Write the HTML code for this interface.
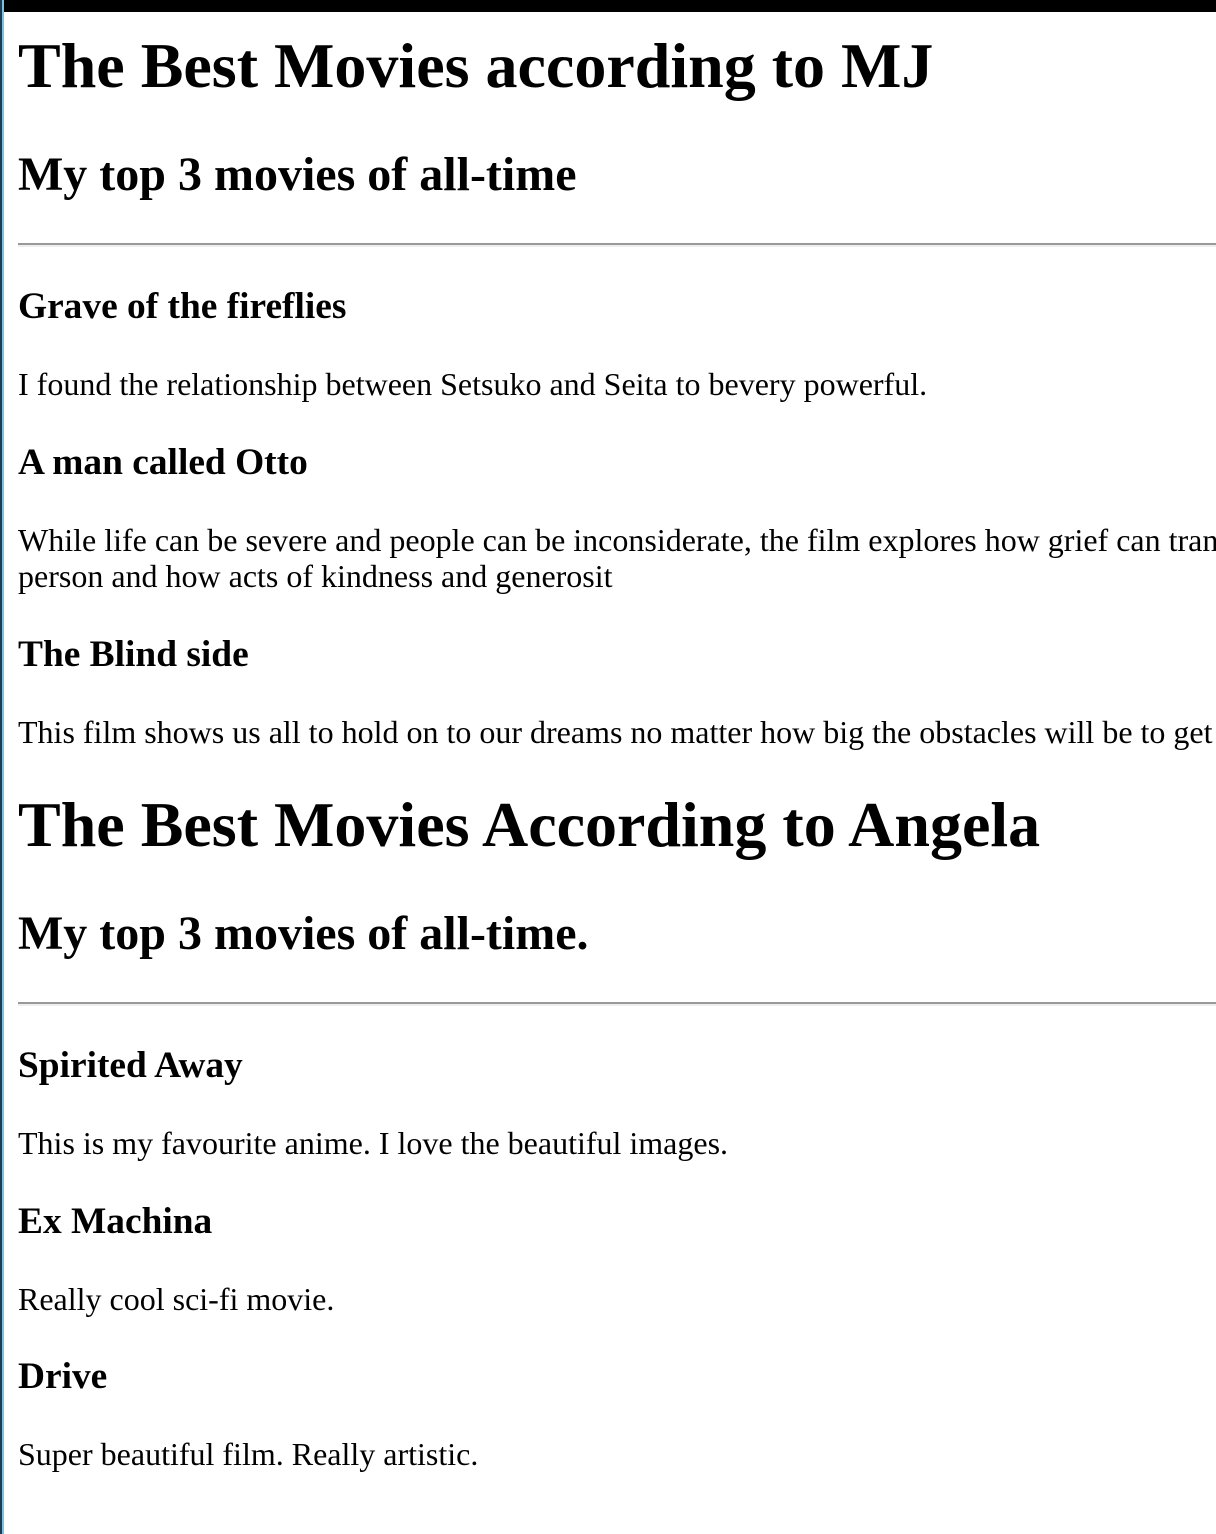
<!DOCTYPE html>
<html><head><meta charset="utf-8"><style>
html,body{margin:0;padding:0;background:#fff;overflow:hidden;}
html{width:1216px;height:1534px;}
#bar{position:absolute;left:0;top:0;width:1216px;height:12px;background:#000;}
#l1{position:absolute;left:0;top:0;width:2px;height:1534px;background:#1d3d55;}
#l2{position:absolute;left:2px;top:0;width:2px;height:1534px;background:#7fc0e0;}
#w{position:absolute;left:18px;top:12px;width:1198px;height:1522px;overflow:hidden;}
#c{width:1330px;font-family:"Liberation Serif",serif;color:#000;padding-top:1px;}
h1{font-size:64px;margin:44px 0;line-height:1.15;}
h1.first{margin-top:16px;}
h1.second{margin-top:37px;}
h2{font-size:48px;margin:41px 0;line-height:1.15;}
hr{border:0;border-top:2px solid #999;border-bottom:2px solid #eee;margin:15px 0 14px;height:0;}
h3{font-size:37.4px;margin:38px 0;line-height:1.15;}
p{font-size:32px;margin:33px 0;line-height:1.15;}
.nw{white-space:nowrap;}
</style></head><body>
<div id="bar"></div><div id="l1"></div><div id="l2"></div>
<div id="w"><div id="c">
<h1 class="first">The Best Movies according to MJ</h1>
<h2>My top 3 movies of all-time</h2>
<hr>
<h3>Grave of the fireflies</h3>
<p>I found the relationship between Setsuko and Seita to bevery powerful.</p>
<h3>A man called Otto</h3>
<p>While life can be severe and people can be inconsiderate, the film explores how grief can transform a person and how acts of kindness and generosit</p>
<h3>The Blind side</h3>
<p class="nw">This film shows us all to hold on to our dreams no matter how big the obstacles will be to get there.</p>
<h1 class="second">The Best Movies According to Angela</h1>
<h2>My top 3 movies of all-time.</h2>
<hr>
<h3>Spirited Away</h3>
<p>This is my favourite anime. I love the beautiful images.</p>
<h3>Ex Machina</h3>
<p>Really cool sci-fi movie.</p>
<h3>Drive</h3>
<p>Super beautiful film. Really artistic.</p>
</div></div>
</body></html>
